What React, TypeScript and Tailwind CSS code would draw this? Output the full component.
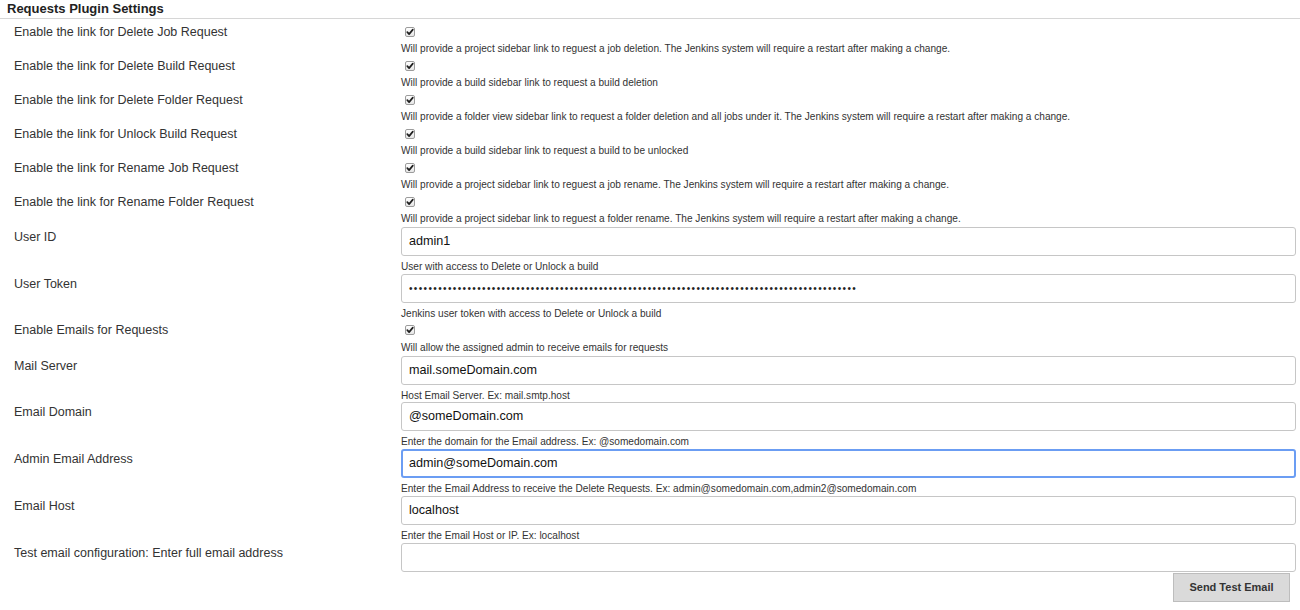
import React from "react";

const Check = () => (
  <div className="ml-[4px] flex h-[10px] w-[10px] items-center justify-center rounded-[2px] border border-[#9c9c9c] bg-gradient-to-b from-white to-[#e6e6e6]">
    <svg width="8" height="8" viewBox="0 0 8 8">
      <path d="M1.3 4.2 L3.1 6.1 L6.8 1.6" fill="none" stroke="#1f1f1f" strokeWidth="1.7" strokeLinecap="round" strokeLinejoin="round" />
    </svg>
  </div>
);

const CheckRow = ({ label, desc, last }: { label: string; desc: string; last?: boolean }) => (
  <div>
    <div className="grid h-[17px] grid-cols-[401px_1fr] items-center">
      <div className="pl-[14px] pt-[2px] text-[12.5px] leading-[15px]">{label}</div>
      <div className="flex items-center">
        <Check />
      </div>
    </div>
    <div className={`${last ? "h-[18px] pt-[4px]" : "h-[17px] pt-[3px]"} pl-[401px] text-[10.1px] leading-[12px] whitespace-nowrap`}>{desc}</div>
  </div>
);

const InputRow = ({
  label,
  value,
  desc,
  focused,
  password,
  shortDesc,
}: {
  label: string;
  value?: string;
  desc?: string;
  focused?: boolean;
  password?: boolean;
  shortDesc?: boolean;
}) => (
  <div>
    <div className="grid grid-cols-[401px_1fr] pr-[4px]">
      <div className="pl-[14px] pt-[3px] text-[12.5px] leading-[15px]">{label}</div>
      <div
        className={`flex h-[29px] items-center rounded-[3px] bg-white ${
          focused ? "border-2 border-[#6b9df3] pl-[6px]" : "border border-[#c6c6c6] pl-[7px]"
        } text-[12.6px] text-[#111]`}
      >
        {password ? (
          <span className="text-[10px] tracking-[1.37px] text-[#222]">{"•".repeat(92)}</span>
        ) : (
          value
        )}
      </div>
    </div>
    {desc !== undefined && (
      <div className={`${shortDesc ? "h-[17px]" : "h-[18px]"} pl-[401px] pt-[5px] text-[10.1px] leading-[12px] whitespace-nowrap`}>{desc}</div>
    )}
  </div>
);

export default function App() {
  return (
    <div className="h-[610px] w-[1300px] overflow-hidden bg-white font-['Liberation_Sans',Arial,sans-serif] text-[#333]">
      <div className="h-[19px] border-b border-[#d6d6d6] pl-[7px] text-[13px] font-bold leading-[17px] text-[#222]">
        Requests Plugin Settings
      </div>
      <div className="pt-[4px]">
        <CheckRow
          label="Enable the link for Delete Job Request"
          desc="Will provide a project sidebar link to reguest a job deletion. The Jenkins system will require a restart after making a change."
        />
        <CheckRow
          label="Enable the link for Delete Build Request"
          desc="Will provide a build sidebar link to request a build deletion"
        />
        <CheckRow
          label="Enable the link for Delete Folder Request"
          desc="Will provide a folder view sidebar link to request a folder deletion and all jobs under it. The Jenkins system will require a restart after making a change."
        />
        <CheckRow
          label="Enable the link for Unlock Build Request"
          desc="Will provide a build sidebar link to request a build to be unlocked"
        />
        <CheckRow
          label="Enable the link for Rename Job Request"
          desc="Will provide a project sidebar link to reguest a job rename. The Jenkins system will require a restart after making a change."
        />
        <CheckRow
          label="Enable the link for Rename Folder Request"
          desc="Will provide a project sidebar link to reguest a folder rename. The Jenkins system will require a restart after making a change."
        />
        <InputRow label="User ID" value="admin1" desc="User with access to Delete or Unlock a build" />
        <InputRow label="User Token" password desc="Jenkins user token with access to Delete or Unlock a build" />
        <CheckRow
          label="Enable Emails for Requests"
          desc="Will allow the assigned admin to receive emails for requests"
          last
        />
        <InputRow label="Mail Server" value="mail.someDomain.com" desc="Host Email Server. Ex: mail.smtp.host" shortDesc />
        <InputRow label="Email Domain" value="@someDomain.com" desc="Enter the domain for the Email address. Ex: @somedomain.com" />
        <InputRow
          label="Admin Email Address"
          value="admin@someDomain.com"
          focused
          desc="Enter the Email Address to receive the Delete Requests. Ex: admin@somedomain.com,admin2@somedomain.com"
        />
        <InputRow label="Email Host" value="localhost" desc="Enter the Email Host or IP. Ex: localhost" />
        <InputRow label="Test email configuration: Enter full email address" value="" />
        <div className="mt-[1px] flex justify-end pr-[10px]">
          <button className="h-[29px] w-[117px] border border-[#bdbdbd] bg-[#dadada] text-[11px] font-bold text-[#333]">
            Send Test Email
          </button>
        </div>
      </div>
    </div>
  );
}
